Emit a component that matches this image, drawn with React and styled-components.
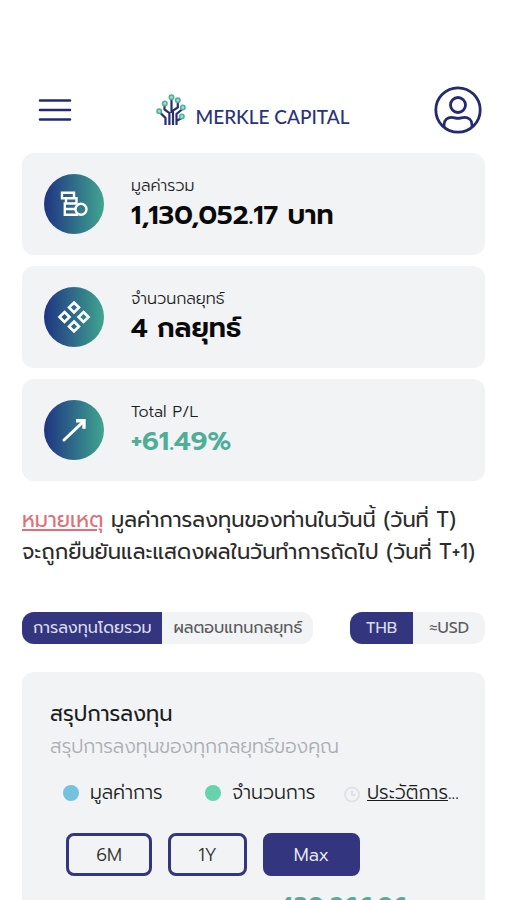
import React, { useState } from "react";
import styled, { createGlobalStyle, css } from "styled-components";

const navy = "#33357f";
const surface = "#f1f3f5";
const teal = "#4fae98";

const GlobalStyle = createGlobalStyle`
  *, *::before, *::after { box-sizing: border-box; }
  body { margin: 0; background: #fff; }
  button { font: inherit; cursor: pointer; }
`;

const Page = styled.div`
  height: 100vh;
  overflow: hidden;
  padding: 84px 22px 0;
  font-family: "Prompt", "Noto Sans", "Noto Sans Thai", sans-serif;
  font-weight: 300;
  color: #1c1c1c;
`;

const Header = styled.header`
  display: flex;
  align-items: center;
  justify-content: space-between;
  height: 52px;
  padding: 0 3px 0 16px;
  margin-bottom: 17px;
`;

const IconButton = styled.button`
  display: flex;
  padding: 0;
  border: 0;
  background: none;
  color: #232a72;
`;

const Brand = styled.a`
  display: flex;
  align-items: flex-start;
  gap: 9px;
  margin-top: 6px;
  color: #2c3278;
  text-decoration: none;
`;

const BrandName = styled.span`
  margin-top: 8px;
  font-family: Lato, sans-serif;
  font-size: 19px;
  line-height: 30px;
  font-weight: 500;
  white-space: nowrap;
`;

const Stats = styled.section`
  display: flex;
  flex-direction: column;
  gap: 11px;
`;

const StatCard = styled.article`
  display: flex;
  align-items: center;
  gap: 27px;
  height: 102px;
  padding: 0 22px;
  border-radius: 12px;
  background: ${surface};
`;

const StatIcon = styled.span`
  display: flex;
  align-items: center;
  justify-content: center;
  flex: none;
  width: 60px;
  height: 60px;
  border-radius: 50%;
  background: linear-gradient(90deg, #1f3482, #3fa58f);
`;

const StatText = styled.div`
  padding-bottom: 2px;
`;

const StatLabel = styled.div`
  font-size: 16px;
  line-height: 24px;
`;

const StatValue = styled.div`
  font-size: 27px;
  line-height: 34px;
  font-weight: 600;
  color: ${(p) => (p.$positive ? teal : "#0a0a0a")};
`;

const Note = styled.p`
  margin: 23px 0 0;
  font-size: 21px;
  line-height: 32px;
  font-weight: 400;
  color: #2b2b2b;
  white-space: nowrap;
`;

const NoteMark = styled.span`
  color: #df6f79;
  text-decoration: underline;
`;

const Toolbar = styled.div`
  display: flex;
  justify-content: space-between;
  margin-top: 44px;
`;

const Segmented = styled.div`
  display: flex;
  height: 32px;
  overflow: hidden;
  border-radius: 12px;
  background: ${surface};
`;

const Segment = styled.button`
  padding: 0 ${(p) => (p.$wide ? 16 : 11)}px;
  border: 0;
  font-size: 16px;
  line-height: 32px;
  font-weight: 400;
  white-space: nowrap;
  background: ${(p) => (p["aria-pressed"] ? navy : "transparent")};
  color: ${(p) => (p["aria-pressed"] ? "#dcdcec" : "#5a5a5a")};
`;

const Panel = styled.section`
  margin-top: 28px;
  padding: 26px 28px 32px;
  border-radius: 12px;
  background: ${surface};
`;

const PanelTitle = styled.h2`
  margin: 0;
  font-size: 21px;
  line-height: 32px;
  font-weight: 400;
`;

const PanelText = styled.p`
  margin: 1px 0 0;
  font-size: 19px;
  line-height: 32px;
  color: #acadb0;
`;

const Legend = styled.div`
  display: grid;
  grid-template-columns: 142px 139px auto;
  align-items: center;
  margin-top: 14px;
  padding-left: 13px;
  font-size: 19px;
  line-height: 32px;
  white-space: nowrap;
`;

const LegendItem = styled.span`
  display: flex;
  align-items: center;
  gap: 11px;
`;

const Dot = styled.span`
  width: 16px;
  height: 16px;
  border-radius: 50%;
  background: ${(p) => p.$color};
`;

const History = styled.span`
  display: flex;
  align-items: center;
  gap: 7px;
`;

const HistoryLink = styled.a`
  color: inherit;
  text-decoration: underline;
`;

const Ranges = styled.div`
  display: flex;
  gap: 16px;
  margin-top: 24px;
  padding-left: 16px;
`;

const RangeButton = styled.button`
  width: ${(p) => p.$width}px;
  height: 43px;
  padding: 0;
  border: 3px solid ${navy};
  border-radius: 8px;
  font-size: 18px;
  ${(p) =>
    p["aria-pressed"]
      ? css`background: ${navy}; color: #f1f1fa;`
      : css`background: transparent; color: #333;`}
`;

const Amount = styled.div`
  margin-top: 14px;
  padding-left: 229px;
  font-size: 24px;
  line-height: 32px;
  font-weight: 600;
  color: ${teal};
`;

const MenuIcon = () => (
  <svg width="34" height="28" viewBox="0 0 34 28" fill="none" stroke="currentColor" strokeWidth="2.6" strokeLinecap="round" aria-hidden="true">
    <path d="M2 4.5h30M2 14h30M2 23.5h30" />
  </svg>
);

const AvatarIcon = () => (
  <svg width="48" height="48" viewBox="0 0 48 48" fill="none" stroke="currentColor" strokeWidth="2.8" aria-hidden="true">
    <circle cx="24" cy="24" r="22.2" />
    <circle cx="24" cy="19" r="7.5" />
    <path d="M10 41v-2c0-5 3.5-7.6 7.5-7.6 2.5 0 4 1 6.5 1s4-1 6.5-1c4 0 7.5 2.6 7.5 7.6v2" />
  </svg>
);

const TreeLogo = () => (
  <svg width="30" height="32" viewBox="0 0 30 32" fill="none" aria-hidden="true">
    <g stroke="#292e72" strokeWidth="2.2">
      <path d="M9.5 31V24L4 18.500M13.400 31V19L8.500 15.500V10.500M15.500 5v14M17 31V16.500l4.800-3.200V8M20.500 31V20l6-5M20.500 27l5-3" />
    </g>
    <g fill="#a9dccd" stroke="#4fb19a" strokeWidth="1.6">
      <circle cx="15.5" cy="3.300" r="2.200" />
      <circle cx="8.800" cy="9.500" r="2.200" />
      <circle cx="21.800" cy="6.300" r="2.200" />
      <circle cx="3.200" cy="17.300" r="2.200" />
      <circle cx="26.800" cy="13.500" r="2.200" />
      <circle cx="25.800" cy="22.500" r="2.200" />
    </g>
  </svg>
);

const CoinsIcon = () => (
  <svg width="30" height="28" viewBox="0 0 30 28" fill="none" stroke="#fff" strokeWidth="2.4" aria-hidden="true">
    <path d="M3 2.800h12v5.400H3zM7 8.200h10.500v5.300H7zM17 13.500H5.800v5.500H16.500M16.500 19H5.800v5.700H19" />
    <circle cx="22" cy="19.300" r="5.500" />
  </svg>
);

const DiamondsIcon = () => (
  <svg width="36" height="36" viewBox="0 0 36 36" fill="none" stroke="#fff" strokeWidth="2.6" aria-hidden="true">
    <path d="M18 3.500l5 5-5 5-5-5zM18 22.500l5 5-5 5-5-5zM8.500 13l5 5-5 5-5-5zM27.500 13l5 5-5 5-5-5z" />
  </svg>
);

const ArrowIcon = () => (
  <svg width="28" height="28" viewBox="0 0 28 28" fill="none" stroke="#fff" strokeWidth="3" strokeLinecap="round" aria-hidden="true">
    <path d="M4 24L23.500 5.500" />
    <path d="M16 4.800H24V12.800" strokeWidth="3.4" strokeLinecap="butt" />
  </svg>
);

const ClockIcon = () => (
  <svg width="16" height="20" viewBox="0 0 16 20" fill="none" stroke="#dddee1" strokeWidth="1.6" aria-hidden="true">
    <circle cx="8" cy="11.500" r="7" />
    <path d="M8 7.500v4.500h3.500" />
  </svg>
);

const stats = [
  { label: "มูลค่ารวม", value: "1,130,052.17 บาท", Icon: CoinsIcon },
  { label: "จำนวนกลยุทธ์", value: "4 กลยุทธ์", Icon: DiamondsIcon },
  { label: "Total P/L", value: "+61.49%", Icon: ArrowIcon, positive: true },
];

const ranges = [
  { name: "6M", width: 86 },
  { name: "1Y", width: 79 },
  { name: "Max", width: 97 },
];

function Choice({ options, wide, label }) {
  const [selected, setSelected] = useState(options[0]);
  return (
    <Segmented role="group" aria-label={label}>
      {options.map((option) => (
        <Segment key={option} $wide={wide} aria-pressed={option === selected} onClick={() => setSelected(option)}>
          {option}
        </Segment>
      ))}
    </Segmented>
  );
}

export default function App() {
  const [range, setRange] = useState("Max");
  return (
    <Page>
      <GlobalStyle />
      <Header>
        <IconButton aria-label="เมนู"><MenuIcon /></IconButton>
        <Brand href="#">
          <TreeLogo />
          <BrandName>MERKLE CAPITAL</BrandName>
        </Brand>
        <IconButton aria-label="บัญชี"><AvatarIcon /></IconButton>
      </Header>
      <main>
        <Stats>
          {stats.map(({ label, value, Icon, positive }) => (
            <StatCard key={label}>
              <StatIcon><Icon /></StatIcon>
              <StatText>
                <StatLabel>{label}</StatLabel>
                <StatValue $positive={positive}>{value}</StatValue>
              </StatText>
            </StatCard>
          ))}
        </Stats>
        <Note>
          <NoteMark>หมายเหตุ</NoteMark> มูลค่าการลงทุนของท่านในวันนี้ (วันที่ T)
          <br />
          จะถูกยืนยันและแสดงผลในวันทำการถัดไป (วันที่ T+1)
        </Note>
        <Toolbar>
          <Choice label="มุมมอง" options={["การลงทุนโดยรวม", "ผลตอบแทนกลยุทธ์"]} />
          <Choice label="สกุลเงิน" options={["THB", "≈USD"]} wide />
        </Toolbar>
        <Panel>
          <PanelTitle>สรุปการลงทุน</PanelTitle>
          <PanelText>สรุปการลงทุนของทุกกลยุทธ์ของคุณ</PanelText>
          <Legend>
            <LegendItem><Dot $color="#74c2df" />มูลค่าการ</LegendItem>
            <LegendItem><Dot $color="#67d3ac" />จำนวนการ</LegendItem>
            <History>
              <ClockIcon />
              <span><HistoryLink href="#">ประวัติการ</HistoryLink>...</span>
            </History>
          </Legend>
          <Ranges>
            {ranges.map(({ name, width }) => (
              <RangeButton key={name} $width={width} aria-pressed={name === range} onClick={() => setRange(name)}>
                {name}
              </RangeButton>
            ))}
          </Ranges>
          <Amount>430,266.96</Amount>
        </Panel>
      </main>
    </Page>
  );
}
